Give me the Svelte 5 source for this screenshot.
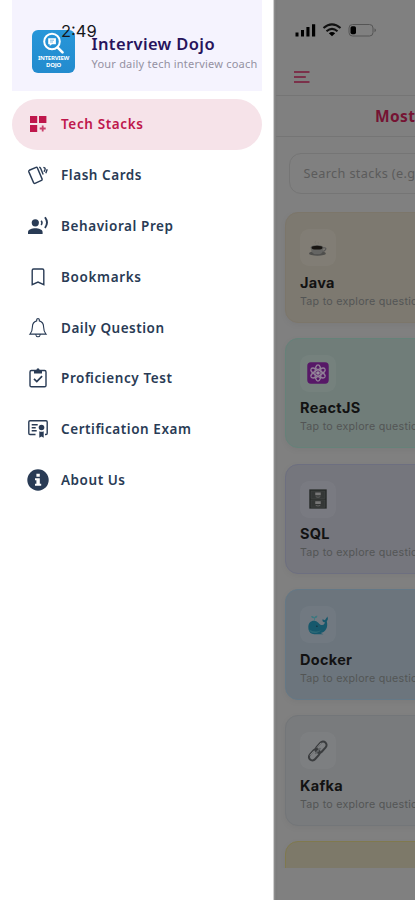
<script>
  const menu = [
    { id: 'stacks', label: 'Tech Stacks', width: 82 },
    { id: 'cards', label: 'Flash Cards', width: 80.5 },
    { id: 'voice', label: 'Behavioral Prep', width: 112 },
    { id: 'bookmark', label: 'Bookmarks', width: 80 },
    { id: 'bell', label: 'Daily Question', width: 103 },
    { id: 'check', label: 'Proficiency Test', width: 111 },
    { id: 'cert', label: 'Certification Exam', width: 130 },
    { id: 'info', label: 'About Us', width: 64 }
  ];
  const stacks = [
    { id: 'java', name: 'Java' },
    { id: 'react', name: 'ReactJS' },
    { id: 'sql', name: 'SQL' },
    { id: 'docker', name: 'Docker' },
    { id: 'kafka', name: 'Kafka' }
  ];
</script>

<div class="screen">
  <aside>
    <header>
      <div class="logo">
        <svg width="24" height="22" viewBox="0 0 24 22" fill="none" stroke="#fff">
          <circle cx="11" cy="9.5" r="7.8" stroke-width="2" />
          <path d="M16.5 15.3l5 5" stroke-width="2.6" stroke-linecap="round" />
          <path d="M7.2 6.2h7.7v6H11l-2.3 1.8v-1.8H7.2z" fill="#fff" stroke="none" />
          <path d="M9 8.2h4M9 10h3" stroke="#2b91d5" stroke-width=".6" />
        </svg>
        <span>INTERVIEW<br />DOJO</span>
      </div>
      <div class="brand">
        <h1>Interview Dojo</h1>
        <p>Your daily tech interview coach</p>
      </div>
      <time>2:49</time>
    </header>
    <nav>
      {#each menu as item, i}
        <a class:active={i === 0} href="#{item.id}">
          <svg width="24" height="24" viewBox="0 0 24 24" fill="none" stroke="currentColor" stroke-width="1.4">
            {#if item.id === 'stacks'}
              <path fill="currentColor" stroke="none" d="M4 4h7.2v7H4zM13 4h7.4v7H13zM4 13h7.2v7H4z" />
              <path d="M16.7 13.5v6M13.7 16.5h6" stroke-width="1.8" opacity=".8" />
            {:else if item.id === 'cards'}
              <path d="M3.3 7.3L10 4.4q1-.3 1.4.6l4.7 11q.3 1-.6 1.4L9 20.4q-1 .3-1.4-.6L2.8 8.7q-.3-1 .5-1.4z" stroke-width="1.5" />
              <path d="M13.2 4.2q1.1.2 1.5 1.2l2.5 6M17.4 4.4l1.2.5q.8.4.5 1.3l-1 2.6M21.2 6.2l-1.4 4" />
            {:else if item.id === 'voice'}
              <g fill="currentColor" stroke="none">
                <circle cx="9.3" cy="8.8" r="3.6" />
                <path d="M2 20v-2c0-2.6 4-3.8 7.3-3.8s7.3 1.2 7.3 3.8v2z" />
              </g>
              <path d="M15.2 6.7q1.6 2 0 4.3" stroke-width="1.5" />
              <path d="M19 3.2q4 5.4 0 10.8" stroke-width="1.9" />
            {:else if item.id === 'bookmark'}
              <path d="M6.2 19.7V5.4q0-1.4 1.4-1.4h8.8q1.4 0 1.4 1.4v14.3L12 17z" stroke-width="1.4" />
            {:else if item.id === 'bell'}
              <path d="M4 18.1q2.4-2.7 2.4-7 0-5 4.3-6.2V3.6q0-1 1.3-1t1.3 1v1.3q4.3 1.2 4.3 6.2 0 4.3 2.4 7zM9.7 18.5q.4 2.3 2.3 2.3t2.3-2.3" stroke-width="1.1" />
            {:else if item.id === 'check'}
              <rect x="4" y="4.5" width="16" height="16.3" rx="1.4" stroke-width="1.4" />
              <path d="M8 4h2.4q.2-1.8 1.6-1.8T13.6 4H16v3.4H8z" fill="currentColor" stroke="none" />
              <path d="M8 12.8l2.8 2.7 5.3-5.3" stroke-width="1.7" />
            {:else if item.id === 'cert'}
              <path d="M9.5 17.5H4q-1.2 0-1.2-1.2V5q0-1.2 1.2-1.2h16q1.2 0 1.2 1.2v11.3q0 1.2-1.2 1.2h-1M5.7 7.7h6M5.7 10.7h4M5.7 13.7h5" stroke-width="1.4" />
              <circle cx="15.5" cy="10.5" r="2.8" fill="currentColor" stroke="none" />
              <path d="M13.3 14.3q2.2 1 4.4 0v6.4l-2.2-1.1-2.2 1.1z" fill="currentColor" stroke="none" />
            {:else}
              <circle cx="12" cy="12" r="10.7" fill="currentColor" stroke="none" />
              <path d="M10.4 5.7h3.4v3h-3.4zM9 10.2h4.8v5.6h1.4v2H9v-2h1.4v-3.6H9z" fill="#fff" stroke="none" />
            {/if}
          </svg>
          <svg class="label" width={item.width} height="22"><text x="0" y="16" textLength={item.width}>{item.label}</text></svg>
        </a>
      {/each}
    </nav>
  </aside>

  <main>
    <div class="status">
      <svg width="84" height="16" viewBox="0 0 84 16">
        <path d="M.5 10.5h3v4h-3zM6 8h3v6.5H6zM11.4 5h3.1v9.5h-3.1zM17 2.3h3.2v12.2H17z" />
        <g fill="none" stroke="#101010" stroke-width="2.1">
          <path d="M28.5 6q8.5-7.2 17 0M31.5 9.2q5.5-4.6 11 0" />
        </g>
        <path d="M33.8 11.2q3.2-2.3 6.4 0L37 14.2z" />
        <rect x="54" y="2.5" width="24" height="11.5" rx="3.5" fill="none" stroke="#555" />
        <path d="M79.5 6.2q3 2 0 4z" fill="#555" />
        <rect x="55.5" y="4.3" width="5.5" height="8" rx="1.7" />
      </svg>
    </div>
    <div class="toolbar">
      <svg width="18" height="14" viewBox="0 0 18 14" stroke="#7a1738" stroke-width="1.7">
        <path d="M-1 2h16.5M-1 7h12.8M-1 12h16.5" />
      </svg>
    </div>
    <div class="tab">Most Popular</div>
    <div class="search">Search stacks (e.g. Java)</div>
    <div class="list">
      {#each stacks as stack}
        <article class={stack.id}>
          <div class="tile">
            <svg width="22" height="22" viewBox="0 0 24 24">
              {#if stack.id === 'java'}
                <g transform="translate(1.3 2.4) scale(.92 .86)">
                  <ellipse cx="11" cy="18" rx="10" ry="3" fill="#4e4e4c" />
                  <path d="M17 11q5-.8 3.7 2-1 2.3-4.7 2.5" fill="none" stroke="#555" stroke-width="1.4" />
                  <path d="M3 10.5h15q0 7.5-4.5 8.5h-6Q3.5 17.5 3 10.5z" fill="#656563" />
                  <ellipse cx="10.5" cy="10.5" rx="7.5" ry="3.1" fill="#60605e" />
                  <ellipse cx="10.5" cy="10.7" rx="6.5" ry="2.4" fill="#171411" />
                  <path d="M9 6q-2-2 0-4M12 6q1-1-.3-2.3" fill="none" stroke="#77736b" stroke-width=".8" />
                </g>
              {:else if stack.id === 'react'}
                <rect x=".3" y=".3" width="23.4" height="23.4" rx="4" fill="#571867" />
                <g fill="none" stroke="#918097" stroke-width="1.3">
                  <ellipse cx="12" cy="12" rx="3.3" ry="8.8" />
                  <ellipse cx="12" cy="12" rx="3.3" ry="8.8" transform="rotate(60 12 12)" />
                  <ellipse cx="12" cy="12" rx="3.3" ry="8.8" transform="rotate(120 12 12)" />
                </g>
                <circle cx="12" cy="12" r="2" fill="#998e9e" />
              {:else if stack.id === 'sql'}
                <path d="M2.5 1.5h19v21h-19z" fill="#272a29" />
                <path d="M4.5 3.5h15v8h-15zM4.5 13h15v8h-15z" fill="#343736" stroke="#484b4a" stroke-width=".6" />
                <path d="M9 5h6v3H9zM9 14.5h6v3H9z" fill="#777" />
                <path d="M9.5 9.5q2.5 1.2 5 0M9.5 19q2.5 1.2 5 0" fill="none" stroke="#666" />
              {:else if stack.id === 'docker'}
                <path d="M1.5 15.5C1 9 5 6.8 9 7.5c3.6.7 4.6 5 7.8 4.4 1.8-.4 2.5-1.3 2.7-3-2.5 0-3-1.8-2.5-3.2l2.5 1 2.8-4q1.5 3-.7 5.6c1.6 6.2-1.2 11.7-6.8 12.5l3 1.4H8C4.3 21.5 2 20 1.5 15.5z" fill="#17586c" />
                <path d="M2 16.8q7 4.2 13 .8-1.5 2.9-7.2 3.2Q3 20 2 16.8z" fill="#2c6876" />
                <path d="M7.8 7V4.5Q4.7 5 4.5 2.2q2.3-.3 3.3 1.5Q9 1.5 11.2 2q.2 2.5-2.5 2.5V7z" fill="#3c7880" />
                <circle cx="10.8" cy="13.4" r=".8" fill="#152b37" />
              {:else}
                <g fill="none" transform="rotate(-48 12 12)">
                  <g stroke="#3b3d3f" stroke-width="2.2">
                    <rect x="-.7" y="8" width="14" height="7.6" rx="3.8" />
                    <rect x="10.3" y="8" width="14" height="7.6" rx="3.8" />
                  </g>
                  <path d="M2.5 8.6h7M14 8.6h7" stroke="#929394" stroke-width=".8" />
                  <path d="M7.8 11.8h8.5" stroke="#606365" stroke-width="1.8" />
                </g>
              {/if}
            </svg>
          </div>
          <h2>{stack.name}</h2>
          <p>Tap to explore questions</p>
        </article>
      {/each}
      <article class="next"></article>
    </div>
  </main>
</div>

<style>
  :global(body) { margin: 0; overflow: hidden; }
  .screen { display: flex; width: 415px; height: 900px; overflow: hidden; background: #fff; font-family: "Noto Sans", sans-serif; }
  aside { flex: 0 0 273px; box-sizing: border-box; padding: 0 11px 0 12px; background: #fff; }
  header { position: relative; display: flex; align-items: flex-start; box-sizing: border-box; width: 250px; height: 91px; padding: 30px 0 0 20px; background: #f5f3fe; }
  .logo { width: 43px; height: 43px; border-radius: 6px; background: linear-gradient(#2796d9, #238bce); text-align: center; color: #fff; overflow: hidden; flex: none; }
  .logo svg { display: block; margin: 2px 0 0 9px; }
  .logo span { display: block; margin-top: 1px; font: 700 6px/6.5px "Noto Sans", sans-serif; letter-spacing: -.25px; white-space: nowrap; }
  .brand { margin-left: 16.5px; white-space: nowrap; }
  h1 { margin: 3px 0 0; font-size: 16.5px; line-height: 22px; font-weight: 600; letter-spacing: .37px; color: #27145c; }
  .brand p { margin: 1px 0 0; font-size: 11px; line-height: 16px; letter-spacing: .22px; color: #9491a2; }
  time { position: absolute; left: 49px; top: 21px; font: 400 16.5px/20px Inter, sans-serif; color: #16161b; }
  nav { padding-top: 8px; }
  nav a { display: flex; align-items: center; width: 250px; height: 50.8px; box-sizing: border-box; padding-left: 14px; border-radius: 26px; color: #293b55; text-decoration: none; }
  nav a.active { background: #f6e3e9; color: #bf174c; }
  .label { margin-left: 11px; overflow: visible; }
  .label text { font: 600 13.5px "Noto Sans", sans-serif; fill: currentColor; stroke: none; }
  main { flex: 1; min-width: 0; height: 900px; box-sizing: border-box; border-left: 1px solid #d0d0d0; padding-left: 2px; background: linear-gradient(90deg, #929292, #7c7c7c 2px, #808080 4px); overflow: hidden; white-space: nowrap; }
  .status { height: 61px; box-sizing: border-box; padding: 22px 0 0 19px; }
  .status svg { display: block; }
  .toolbar { height: 35px; box-sizing: border-box; padding: 9px 0 0 18px; border-bottom: 1px solid #757575; }
  .toolbar svg { display: block; }
  .tab { height: 41px; box-sizing: border-box; padding-left: 99px; border-bottom: 1px solid #757575; font-size: 15.5px; line-height: 40px; font-weight: 700; letter-spacing: .4px; color: #751333; }
  .search { width: 300px; height: 41px; box-sizing: border-box; margin: 16px 0 0 13px; padding-left: 13.5px; border: 1px solid #757575; border-radius: 12px; font-size: 12.7px; line-height: 39px; letter-spacing: .35px; color: #5b5b5b; }
  .list { display: flex; flex-direction: column; gap: 15.2px; height: 656px; margin-top: 18px; padding-left: 9px; overflow: hidden; }
  article { flex: none; width: 300px; height: 110.6px; box-sizing: border-box; padding: 16px 0 0 14px; border: 1px solid; border-radius: 13px; box-shadow: 0 2px 6px #0000000c; }
  .java { background: #7d7970; border-color: #7c766a; }
  .react { background: #707d79; border-color: #658279; }
  .sql { background: #75767d; border-color: #6d6f80; }
  .docker { background: #6c757d; border-color: #647886; }
  .kafka { background: #797b7d; border-color: #737679; }
  .next { background: #7d7969; border-color: #80794e; }
  .tile { display: flex; align-items: center; justify-content: center; width: 36px; height: 37px; border-radius: 9px; background: #ffffff09; }
  h2 { margin: 6.5px 0 0; font: 700 14.5px/20px Inter, sans-serif; letter-spacing: .3px; color: #121212; }
  article p { margin: 0; font: 400 10.7px/17px Inter, sans-serif; letter-spacing: .25px; color: #535555; }
</style>
